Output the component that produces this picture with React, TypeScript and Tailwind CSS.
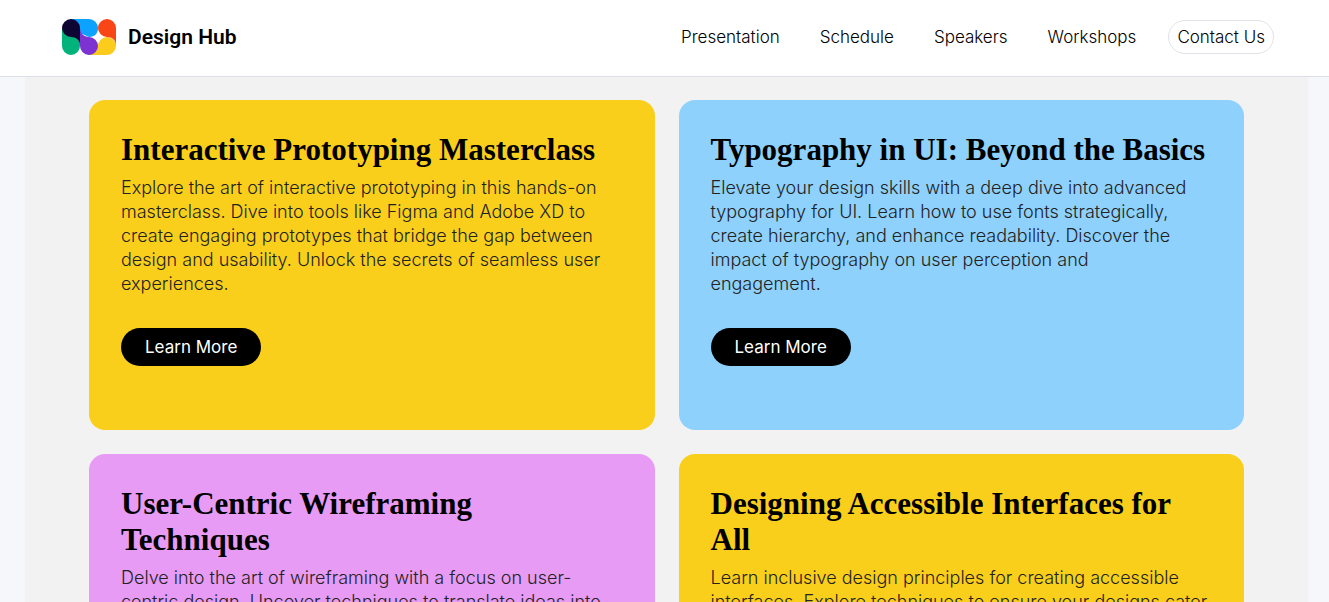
type Workshop = {
  title: string;
  lines: string[];
  color: string;
};

const links = ["Presentation", "Schedule", "Speakers", "Workshops"];

const workshops: Workshop[] = [
  {
    title: "Interactive Prototyping Masterclass",
    lines: [
      "Explore the art of interactive prototyping in this hands-on",
      "masterclass. Dive into tools like Figma and Adobe XD to",
      "create engaging prototypes that bridge the gap between",
      "design and usability. Unlock the secrets of seamless user",
      "experiences.",
    ],
    color: "bg-[#facf1c]",
  },
  {
    title: "Typography in UI: Beyond the Basics",
    lines: [
      "Elevate your design skills with a deep dive into advanced",
      "typography for UI. Learn how to use fonts strategically,",
      "create hierarchy, and enhance readability. Discover the",
      "impact of typography on user perception and",
      "engagement.",
    ],
    color: "bg-[#8ed1fc]",
  },
  {
    title: "User-Centric Wireframing Techniques",
    lines: [
      "Delve into the art of wireframing with a focus on user-",
      "centric design. Uncover techniques to translate ideas into",
    ],
    color: "bg-[#e79bf5]",
  },
  {
    title: "Designing Accessible Interfaces for All",
    lines: [
      "Learn inclusive design principles for creating accessible",
      "interfaces. Explore techniques to ensure your designs cater",
    ],
    color: "bg-[#facf1c]",
  },
];

function Logo() {
  return (
    <svg viewBox="0 0 54 36" className="h-9 w-[54px]" aria-hidden="true">
      <path d="M9 0H27A9 9 0 0 1 36 9C36 14 33 18 27 18L18 14Z" fill="#0da2ff" />
      <path d="M0 9V27A9 9 0 0 0 18 27C18 21 14 17 9 17Z" fill="#00b37a" />
      <path d="M9 0A9 9 0 0 1 18 9V27C18 21 14 18 9 18A9 9 0 0 1 9 0Z" fill="#0e0533" />
      <path d="M45 18A9 9 0 0 1 45 36H27V30L36 27A9 9 0 0 1 45 18Z" fill="#fccc1c" />
      <path d="M18 9C18 14 22 18 27 18A9 9 0 1 1 18 27Z" fill="#7c33d1" />
      <path d="M45 0A9 9 0 0 1 54 9V27C54 21 50 18 45 18A9 9 0 0 1 45 0Z" fill="#fa4616" />
    </svg>
  );
}

function Card({ title, lines, color }: Workshop) {
  return (
    <article className={`rounded-2xl p-8 ${color}`}>
      <h2 className="mb-2 font-['Liberation_Serif',serif] text-[31px] leading-9 font-bold text-black">
        {title}
      </h2>
      <p className="font-['Inter',sans-serif] text-[18px] leading-6 font-light text-[#222]">
        {lines.map((line) => (
          <span key={line} className="block">
            {line}
          </span>
        ))}
      </p>
      <button
        type="button"
        className="my-8 rounded-full bg-black px-6 py-[7px] text-[17px] leading-6 text-white"
      >
        Learn More
      </button>
    </article>
  );
}

export default function App() {
  return (
    <div className="h-screen overflow-hidden bg-[#f5f7fa] font-['Inter',sans-serif] text-black">
      <header className="flex h-[77px] items-center justify-between border-b border-[#dcdfe8] bg-white pr-[55px] pb-0.5 pl-[62px]">
        <a href="#" className="flex items-center gap-3">
          <Logo />
          <span className="font-['Roboto',sans-serif] text-[21px] leading-7 font-semibold">
            Design Hub
          </span>
        </a>
        <nav className="flex items-center gap-10 text-[17px] leading-6 font-light">
          {links.map((link) => (
            <a key={link} href="#">
              {link}
            </a>
          ))}
          <a href="#" className="-ml-2 rounded-full border border-[#e1e3e8] px-2 py-1">
            Contact Us
          </a>
        </nav>
      </header>
      <main className="pr-[21px] pl-[25px]">
        <div className="grid grid-cols-2 gap-6 bg-[#f2f2f2] px-16 py-[23px]">
          {workshops.map((workshop) => (
            <Card key={workshop.title} {...workshop} />
          ))}
        </div>
      </main>
    </div>
  );
}
